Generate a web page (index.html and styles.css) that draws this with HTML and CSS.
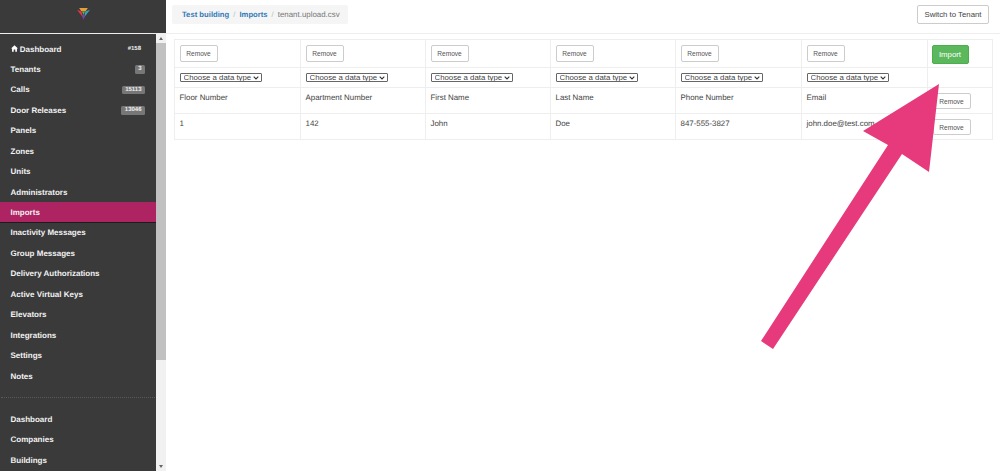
FILE: index.html
```html
<!DOCTYPE html>
<html lang="en">
<head>
<meta charset="utf-8">
<title>Imports</title>
<link rel="stylesheet" href="styles.css">
</head>
<body>
<div class="app">
  <aside class="sidebar">
    <div class="brand">
      <svg class="logo" viewBox="0 0 12 11" width="13" height="12" aria-hidden="true">
        <polygon points="2,0 10,0 8,3 4,3" fill="#e8a035"/>
        <polygon points="0,1.5 4.2,3.2 5.6,9" fill="#e0364f"/>
        <polygon points="12,1.5 7.8,3.2 6.4,9" fill="#2fa8c0"/>
        <polygon points="4.4,6.5 7.6,6.5 6,11" fill="#7a3f9e"/>
        <polygon points="4.6,3.2 7.4,3.2 6,6.5" fill="#62ad55"/>
      </svg>
    </div>
    <div class="side-body">
      <nav class="nav">
        <ul class="nav-list">
          <li><a class="nav-item"><span><svg class="home" viewBox="0 0 10 9" width="7" height="7" aria-hidden="true"><path d="M5 0 0 4.5h1.5V9h2.4V6h2.2v3h2.4V4.5H10z" fill="#fff"/></svg> Dashboard</span><span class="tag-plain">#158</span></a></li>
          <li><a class="nav-item"><span>Tenants</span><span class="tag">3</span></a></li>
          <li><a class="nav-item"><span>Calls</span><span class="tag">15113</span></a></li>
          <li><a class="nav-item"><span>Door Releases</span><span class="tag">13046</span></a></li>
          <li><a class="nav-item">Panels</a></li>
          <li><a class="nav-item">Zones</a></li>
          <li><a class="nav-item">Units</a></li>
          <li><a class="nav-item">Administrators</a></li>
          <li><a class="nav-item active">Imports</a></li>
          <li><a class="nav-item">Inactivity Messages</a></li>
          <li><a class="nav-item">Group Messages</a></li>
          <li><a class="nav-item">Delivery Authorizations</a></li>
          <li><a class="nav-item">Active Virtual Keys</a></li>
          <li><a class="nav-item">Elevators</a></li>
          <li><a class="nav-item">Integrations</a></li>
          <li><a class="nav-item">Settings</a></li>
          <li><a class="nav-item">Notes</a></li>
        </ul>
        <hr class="nav-sep">
        <ul class="nav-list">
          <li><a class="nav-item">Dashboard</a></li>
          <li><a class="nav-item">Companies</a></li>
          <li><a class="nav-item">Buildings</a></li>
        </ul>
      </nav>
      <div class="scrollbar">
        <span class="sb-up"></span>
        <span class="sb-thumb"></span>
        <span class="sb-down"></span>
      </div>
    </div>
  </aside>
  <main class="main">
    <header class="topbar">
      <ol class="crumbs">
        <li><a>Test building</a></li>
        <li class="sep">/</li>
        <li><a>Imports</a></li>
        <li class="sep">/</li>
        <li class="current">tenant.upload.csv</li>
      </ol>
      <button class="btn btn-top">Switch to Tenant</button>
    </header>
    <section class="content">
      <table class="grid">
        <colgroup>
          <col class="c1"><col class="c2"><col class="c2"><col class="c2"><col class="c1"><col class="c1"><col class="c7">
        </colgroup>
        <tbody>
          <tr class="row-tight">
            <td><button class="btn">Remove</button></td>
            <td><button class="btn">Remove</button></td>
            <td><button class="btn">Remove</button></td>
            <td><button class="btn">Remove</button></td>
            <td><button class="btn">Remove</button></td>
            <td><button class="btn">Remove</button></td>
            <td><button class="btn btn-import">Import</button></td>
          </tr>
          <tr>
            <td><select class="pick"><option>Choose a data type</option></select></td>
            <td><select class="pick"><option>Choose a data type</option></select></td>
            <td><select class="pick"><option>Choose a data type</option></select></td>
            <td><select class="pick"><option>Choose a data type</option></select></td>
            <td><select class="pick"><option>Choose a data type</option></select></td>
            <td><select class="pick"><option>Choose a data type</option></select></td>
            <td></td>
          </tr>
          <tr class="row-data">
            <td>Floor Number</td>
            <td>Apartment Number</td>
            <td>First Name</td>
            <td>Last Name</td>
            <td>Phone Number</td>
            <td>Email</td>
            <td><button class="btn btn-row">Remove</button></td>
          </tr>
          <tr class="row-data">
            <td>1</td>
            <td>142</td>
            <td>John</td>
            <td>Doe</td>
            <td>847-555-3827</td>
            <td>john.doe@test.com</td>
            <td><button class="btn btn-row">Remove</button></td>
          </tr>
        </tbody>
      </table>
    </section>
  </main>
</div>
<svg class="arrow" viewBox="0 0 1000 471" width="1000" height="471" aria-hidden="true">
  <polygon points="939,84 863,131 888,145 761,341 773,349 902,154 929,172" fill="#e73a7d"/>
</svg>
</body>
</html>
```
FILE: styles.css
```css
* { box-sizing: border-box; }
html, body { margin: 0; height: 100%; overflow: hidden; background: #fff; }
body { font-family: "Liberation Sans", Arial, sans-serif; color: #333; position: relative; text-rendering: geometricPrecision; }

.app { display: flex; height: 471px; }

.sidebar { width: 166px; flex: none; display: flex; flex-direction: column; background: #3a3a3a; }
.brand { height: 34px; flex: none; display: flex; justify-content: center; padding: 8px 0 0 0; border-bottom: 1px solid #eee; }
.logo { display: block; }
.side-body { flex: 1; display: flex; min-height: 0; }

.nav { flex: 1; min-width: 0; padding-top: 4.8px; overflow: hidden; }
.nav-list { list-style: none; margin: 0; padding: 0; }
.nav-item { display: flex; justify-content: space-between; align-items: center; height: 20.45px; padding: 0 11px 0 10.5px; color: #f2f2f2; font-size: 8px; font-weight: 700; white-space: nowrap; }
.nav-item.active { background: #ae2463; border-bottom: 1px solid #1c1c1c; }
.home { vertical-align: -0.5px; }
.tag { background: #777; color: #eee; border-radius: 1.5px; font-size: 6px; line-height: 8.5px; padding: 0 3.5px; font-weight: 700; }
.tag-plain { color: #eee; font-size: 6px; font-weight: 700; margin-right: 4px; }
.nav-sep { border: 0; border-top: 1px dotted #5a5a5a; margin: 11px 1px 11px 1px; }

.scrollbar { width: 10px; flex: none; background: #f1f1f1; display: flex; flex-direction: column; }
.sb-up, .sb-down { height: 9px; flex: none; display: flex; align-items: center; justify-content: center; }
.sb-up::before { content: ""; border: 2px solid transparent; border-top: 0; border-bottom: 3px solid #666; }
.sb-down::before { content: ""; border: 2px solid transparent; border-bottom: 0; border-top: 3px solid #666; }
.sb-thumb { height: 317px; background: #c1c1c1; }
.sb-down { margin-top: auto; }

.main { flex: 1; min-width: 0; display: flex; flex-direction: column; }
.topbar { height: 34px; flex: none; display: flex; justify-content: space-between; align-items: flex-start; padding: 5px 11px 0 6px; border-bottom: 1px solid #eee; }
.crumbs { list-style: none; margin: 0; height: 19px; width: 176px; padding: 0 0 0 10px; display: flex; align-items: center; gap: 4px; background: #f5f5f5; border-radius: 2px; font-size: 7.7px; white-space: nowrap; }
.crumbs a { color: #337ab7; font-weight: 700; }
.crumbs .sep { color: #bbb; }
.crumbs .current { color: #777; font-size: 7.9px; }

.btn { font-family: inherit; background: #fff; border: 1px solid #ccc; border-radius: 2px; color: #555; font-size: 6.6px; height: 17px; width: 38px; padding: 0; display: block; }
.btn-top { width: 72px; height: 19px; font-size: 7.8px; color: #444; }
.btn-row { height: 16px; }
.btn-import { background: #5cb85c; border-color: #4cae4c; color: #fff; height: 19px; width: 37px; font-size: 7.8px; margin-left: -1px; }

.content { padding: 5px 0 0 7.5px; }
.grid { border-collapse: collapse; table-layout: fixed; width: 818px; font-size: 7.9px; color: #444; }
.c1 { width: 126px; }
.c2 { width: 125px; }
.c7 { width: 65px; }
.grid td { border: 1px solid #eee; padding: 5px; vertical-align: top; line-height: 10px; }
.grid .row-tight td { padding-bottom: 3px; }
.grid .row-data td { padding-bottom: 4px; }
.pick { display: block; appearance: none; -webkit-appearance: none; font-family: inherit; font-size: 7.8px; height: 9px; width: 82px; padding: 0 0 0 3px; margin: 0; border: 1px solid #666; border-radius: 1px; color: #444; line-height: 7px; background: #fff url("data:image/svg+xml,%3Csvg xmlns='http://www.w3.org/2000/svg' width='6' height='4' viewBox='0 0 6 4'%3E%3Cpath d='M.7.7 3 3l2.3-2.3' fill='none' stroke='%23333' stroke-width='1.1'/%3E%3C/svg%3E") no-repeat right 2px center; }

.arrow { position: absolute; left: 0; top: 0; pointer-events: none; }
```
